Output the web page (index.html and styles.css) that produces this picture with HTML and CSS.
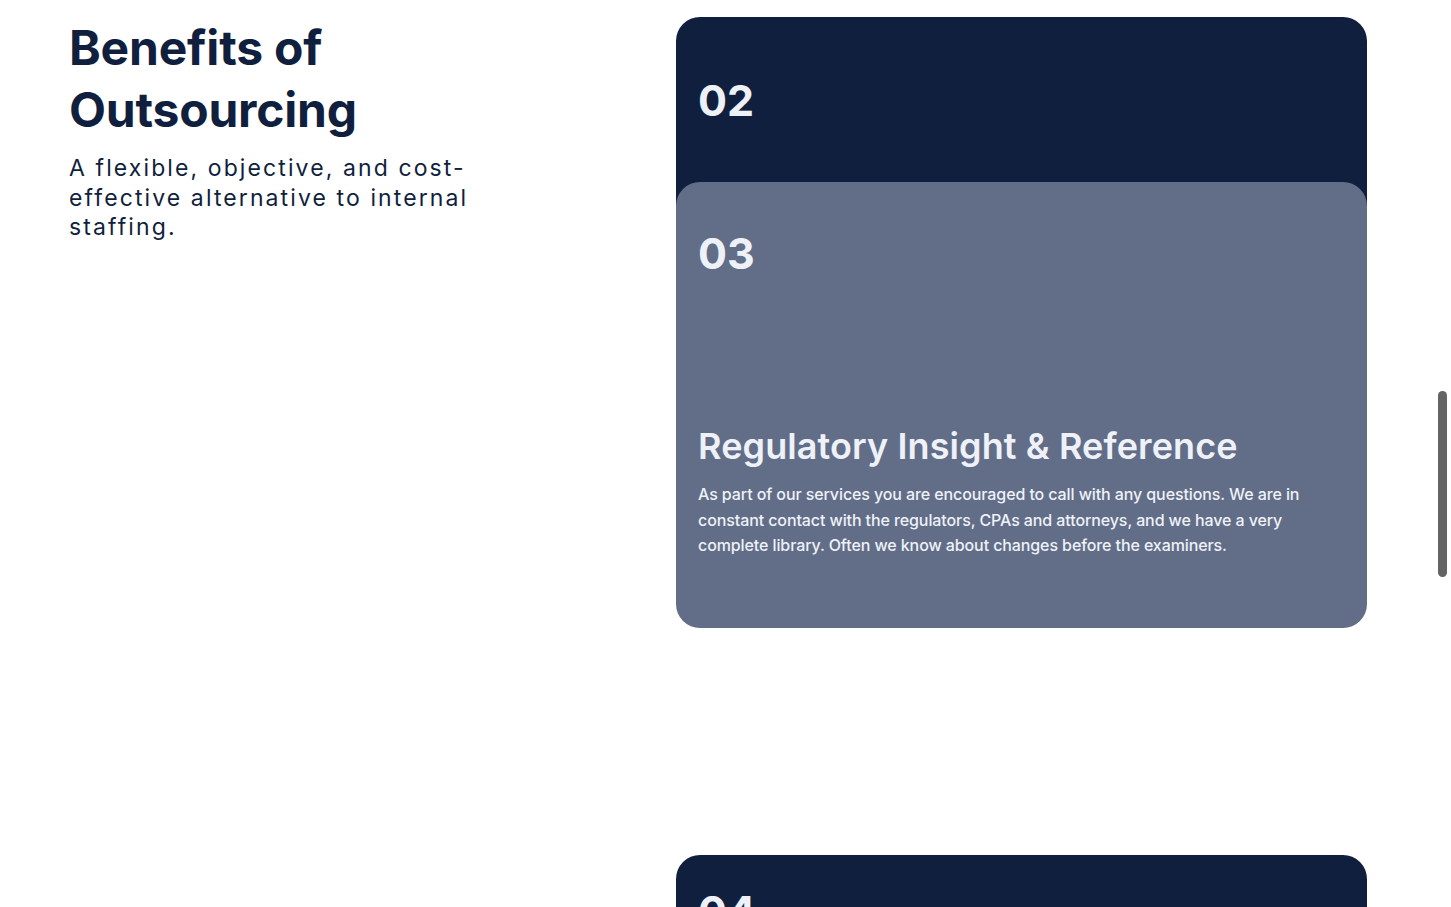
FILE: index.html
```html
<!DOCTYPE html>
<html lang="en">
<head>
<meta charset="utf-8">
<title>Benefits of Outsourcing</title>
<link rel="stylesheet" href="styles.css">
</head>
<body>
<div class="page">
  <section class="benefits">
    <div class="intro">
      <h2 class="intro-title">Benefits of Outsourcing</h2>
      <p class="intro-sub">A flexible, objective, and cost-effective alternative to internal staffing.</p>
    </div>
    <div class="stack">
      <article class="card card-dark card-02">
        <div class="card-num">02</div>
      </article>
      <article class="card card-slate card-03">
        <div class="card-num">03</div>
        <div class="card-body">
          <h3 class="card-title">Regulatory Insight &amp; Reference</h3>
          <p class="card-text">As part of our services you are encouraged to call with any questions. We are in constant contact with the regulators, CPAs and attorneys, and we have a very complete library. Often we know about changes before the examiners.</p>
        </div>
      </article>
      <article class="card card-dark card-04">
        <div class="card-num">04</div>
      </article>
    </div>
  </section>
</div>
<div class="scroll-thumb"></div>
</body>
</html>
```

FILE: styles.css
```css
html, body {
  margin: 0;
  padding: 0;
  background: #ffffff;
  overflow: hidden;
}
body {
  font-family: "Inter", "Liberation Sans", sans-serif;
  color: #111f3e;
}
.page {
  height: 907px;
  overflow: hidden;
}
.benefits {
  display: grid;
  grid-template-columns: 1fr 691px;
  padding: 17px 84px 0 69px;
  align-items: start;
}
.intro {
  max-width: 420px;
}
.intro-title {
  margin: 0;
  font-size: 48px;
  line-height: 62px;
  font-weight: 700;
  color: #111f3e;
  letter-spacing: -0.2px;
}
.intro-sub {
  margin: 13px 0 0;
  font-size: 23px;
  line-height: 29.5px;
  letter-spacing: 2.1px;
  font-weight: 400;
  color: #111f3e;
}
.stack {
  display: flex;
  flex-direction: column;
}
.card {
  position: relative;
  border-radius: 24px;
  box-sizing: border-box;
  padding: 0 22px;
  color: #eef2f8;
}
.card-dark {
  background: #111f3e;
}
.card-slate {
  background: #626d87;
}
.card-num {
  font-size: 43px;
  line-height: 52px;
  font-weight: 700;
  color: #eef2f8;
}
.card-02 {
  height: 446px;
  padding-top: 57px;
  margin-bottom: -281px;
}
.card-03 {
  height: 446px;
  padding-top: 45px;
  padding-bottom: 69px;
  display: flex;
  flex-direction: column;
}
.card-body {
  margin-top: auto;
}
.card-title {
  margin: 0;
  font-size: 36px;
  line-height: 43px;
  font-weight: 600;
  color: #eef2f8;
  letter-spacing: 0.1px;
}
.card-text {
  margin: 14px 0 0;
  font-size: 16px;
  line-height: 25.6px;
  font-weight: 500;
  letter-spacing: -0.1px;
  color: #eef2f8;
  max-width: 610px;
}
.card-04 {
  height: 446px;
  margin-top: 227px;
  padding-top: 30px;
}
.scroll-thumb {
  position: fixed;
  right: 4px;
  top: 391px;
  width: 9px;
  height: 186px;
  border-radius: 5px;
  background: #646464;
}
```
